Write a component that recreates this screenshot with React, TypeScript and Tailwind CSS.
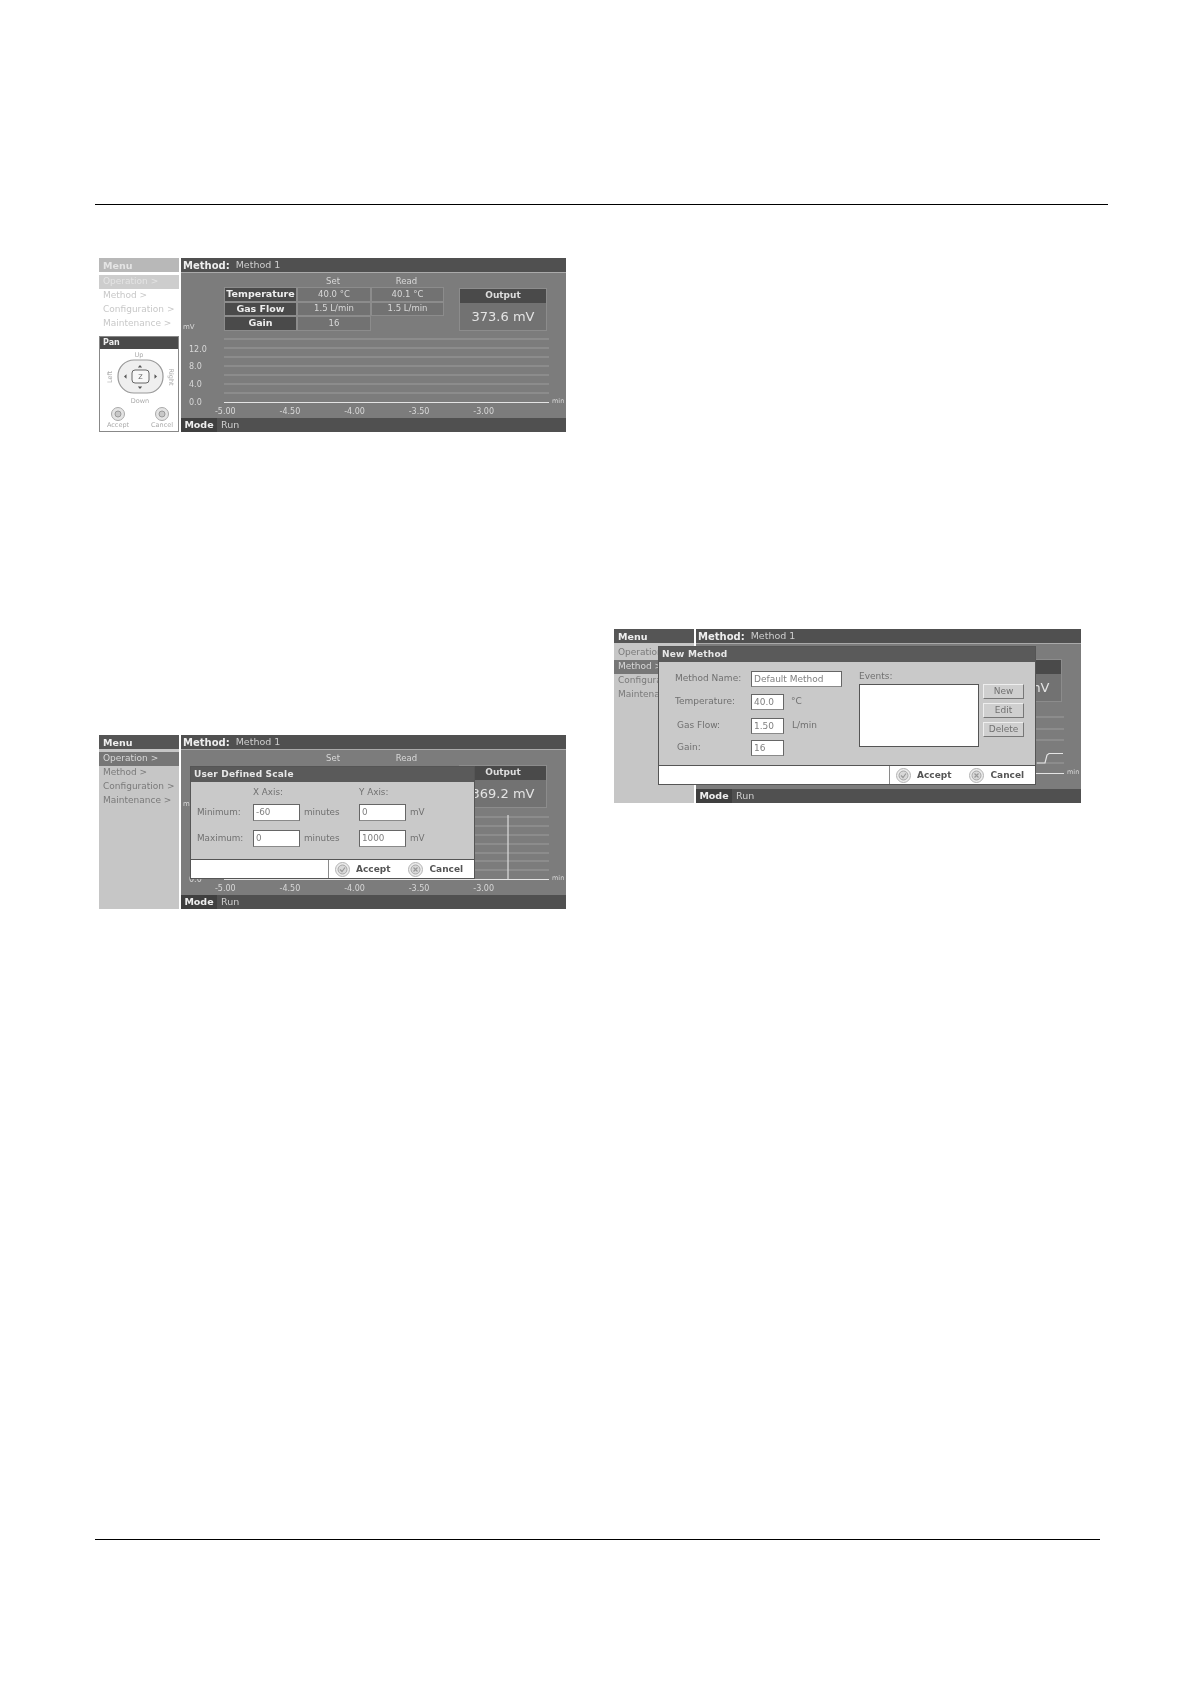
import type { ReactNode } from "react";

const menuItems = ["Operation >", "Method >", "Configuration >", "Maintenance >"];
const xLabels = ["-5.00", "-4.50", "-4.00", "-3.50", "-3.00"];
const yLabels = ["12.0", "8.0", "4.0", "0.0"];

function RoundIcon({ cancel }: { cancel?: boolean }) {
  return (
    <svg width="15" height="15" viewBox="0 0 15 15" className="shrink-0">
      <circle cx="7.5" cy="7.5" r="7" fill="#ececec" stroke="#b4b4b4" />
      <circle cx="7.5" cy="7.5" r="4.5" fill="#d8d8d8" stroke="#a6a6a6" />
      {cancel ? (
        <path d="M5.5 5.5l4 4M9.5 5.5l-4 4" stroke="#999" strokeWidth="1.2" />
      ) : (
        <path d="M5 7.5l2 2 3-4" stroke="#999" strokeWidth="1.2" fill="none" />
      )}
    </svg>
  );
}

function DialogFooter({ left, gap }: { left: number; gap: number }) {
  return (
    <div className="flex h-[19px] shrink-0 border-t border-[#555] bg-white">
      <div style={{ width: left }} className="border-r border-[#8a8a8a]" />
      <div className="flex flex-1 items-center pl-[6px] pt-[1px] text-[9px] font-bold text-[#555]">
        <RoundIcon />
        <span className="ml-[6px]" style={{ marginRight: gap }}>Accept</span>
        <RoundIcon cancel />
        <span className="ml-[6px]">Cancel</span>
      </div>
    </div>
  );
}

function Input({ w, h = 17, value }: { w: number; h?: number; value?: string }) {
  return (
    <div
      style={{ width: w, height: h }}
      className="flex shrink-0 items-center border border-[#666] border-b-[#8a8a8a] bg-white pl-[2px] leading-none text-[#808080]"
    >
      {value}
    </div>
  );
}

function DialogShell({ title, className, children }: { title: string; className: string; children: ReactNode }) {
  return (
    <div className={`absolute flex flex-col border border-[#555] bg-[#c9c9c9] ${className}`}>
      <div className="flex h-[15px] shrink-0 items-center bg-[#5a5a5a] pl-[3px] pt-[1px] text-[9px] font-bold tracking-[0.2px] text-[#e8e8e8]">
        {title}
      </div>
      {children}
    </div>
  );
}

function ScaleDialog() {
  return (
    <DialogShell title="User Defined Scale" className="left-[91px] top-[31px] h-[113px] w-[285px]">
      <div className="flex-1 pl-[6px] pt-[4px] text-[8.8px] text-[#707070]">
        <div className="flex h-[14px] items-center">
          <span className="ml-[56px] w-[106px]">X Axis:</span>
          <span>Y Axis:</span>
        </div>
        <div className="mt-[4px] flex items-center">
          <span className="w-[56px]">Minimum:</span>
          <Input w={47} value="-60" />
          <span className="w-[59px] pl-[4px]">minutes</span>
          <Input w={47} value="0" />
          <span className="pl-[4px]">mV</span>
        </div>
        <div className="mt-[9px] flex items-center">
          <span className="w-[56px]">Maximum:</span>
          <Input w={47} value="0" />
          <span className="w-[59px] pl-[4px]">minutes</span>
          <Input w={47} value="1000" />
          <span className="pl-[4px]">mV</span>
        </div>
      </div>
      <DialogFooter left={138} gap={18} />
    </DialogShell>
  );
}

function MethodDialog() {
  return (
    <DialogShell title="New Method" className="left-[44px] top-[17px] h-[139px] w-[378px]">
      <div className="flex flex-1 text-[9px] text-[#707070]">
        <div className="w-[200px] pl-[16px] pt-[9px]">
          <div className="flex items-center">
            <span className="w-[76px]">Method Name:</span>
            <Input w={91} h={16} value="Default Method" />
          </div>
          <div className="mt-[7px] flex items-center">
            <span className="w-[76px]">Temperature:</span>
            <Input w={33} h={16} value="40.0" />
            <span className="ml-[7px]">°C</span>
          </div>
          <div className="mt-[8px] flex items-center">
            <span className="w-[76px] pl-[2px]">Gas Flow:</span>
            <Input w={33} h={16} value="1.50" />
            <span className="ml-[8px]">L/min</span>
          </div>
          <div className="mt-[6px] flex items-center">
            <span className="w-[76px] pl-[2px]">Gain:</span>
            <Input w={33} h={16} value="16" />
          </div>
        </div>
        <div className="w-[124px] pt-[8px]">
          <div className="flex h-[14px] items-center">Events:</div>
          <div className="h-[63px] w-[120px] border border-[#555] bg-white" />
        </div>
        <div className="flex flex-col gap-[4px] pt-[22px]">
          {["New", "Edit", "Delete"].map((b) => (
            <div
              key={b}
              className="flex h-[15px] w-[41px] items-center justify-center border border-t-[#eee] border-l-[#eee] border-r-[#777] border-b-[#777] bg-[#cfcfcf]"
            >
              {b}
            </div>
          ))}
        </div>
      </div>
      <DialogFooter left={231} gap={18} />
    </DialogShell>
  );
}

function PanPanel() {
  return (
    <div className="mt-auto flex h-[96px] flex-col border border-[#888] bg-white">
      <div className="flex h-[12px] items-center bg-[#4a4a4a] pl-[3px] text-[8px] font-bold text-[#eee]">Pan</div>
      <svg viewBox="0 0 78 82" className="flex-1" fontFamily="DejaVu Sans" fontSize="6.5" fill="#aaa">
        <text x="39" y="8" textAnchor="middle">Up</text>
        <text x="40" y="54" textAnchor="middle">Down</text>
        <text transform="translate(12 28) rotate(-90)" textAnchor="middle">Left</text>
        <text transform="translate(69 28) rotate(90)" textAnchor="middle">Right</text>
        <rect x="18" y="11" width="45" height="33" rx="16" fill="#efefef" stroke="#999" strokeWidth="1.2" />
        <rect x="32" y="21" width="17" height="13" rx="3" fill="#f7f7f7" stroke="#666" />
        <text x="40.5" y="30" textAnchor="middle" fill="#666">Z</text>
        <path d="M40 16l2.2 2.5h-4.4zM40 40l2.2-2.5h-4.4zM24 27.5l2.5-2.2v4.4zM57 27.5l-2.5-2.2v4.4z" fill="#555" />
        <circle cx="18" cy="65" r="6.5" fill="#e4e4e4" stroke="#aaa" />
        <circle cx="18" cy="65" r="3" fill="#c8c8c8" stroke="#999" />
        <circle cx="62" cy="65" r="6.5" fill="#e4e4e4" stroke="#aaa" />
        <circle cx="62" cy="65" r="3" fill="#c8c8c8" stroke="#999" />
        <text x="18" y="78" textAnchor="middle">Accept</text>
        <text x="62" y="78" textAnchor="middle">Cancel</text>
      </svg>
    </div>
  );
}

type ScreenProps = {
  selected: number;
  output: string;
  grid: number[];
  washed?: boolean;
  // what a dialog lies over: those texts aren't seen, so they aren't drawn
  hideRows?: boolean;
  hideHeads?: boolean;
  hideLabels?: boolean;
  trace?: ReactNode;
  children?: ReactNode;
};

function Screen({ selected, output, grid, washed, hideRows, hideHeads, hideLabels, trace, children }: ScreenProps) {
  const tableCell = "flex items-center justify-center border border-[#8c8c8c]";
  return (
    <div className="relative flex h-[174px] w-[467px] font-['DejaVu_Sans',sans-serif] blur-[0.5px]">
      <div className={`flex w-[80px] flex-col ${washed ? "bg-white" : "bg-[#c6c6c6]"}`}>
        <div className={`flex h-[14px] items-center pl-[4px] pt-[2px] text-[9.5px] font-bold ${washed ? "bg-[#b8b8b8] text-[#e4e4e4]" : "bg-[#555] text-[#eee]"}`}>
          Menu
        </div>
        <div className="pt-[3px]">
          {menuItems.map((item, i) => {
            const active = i === selected;
            const tone = washed
              ? active
                ? "bg-[#cdcdcd] text-[#e4e4e4]"
                : "text-[#c8c8c8]"
              : active
                ? "bg-[#767676] text-[#d8d8d8]"
                : "text-[#7a7a7a]";
            return (
              <div key={item} className={`flex h-[14px] items-center pl-[4px] text-[9px] whitespace-nowrap ${tone}`}>
                {item}
              </div>
            );
          })}
        </div>
        {washed && <PanPanel />}
      </div>

      <div className="ml-[2px] flex w-[385px] flex-col bg-[#7c7c7c]">
        <div className="flex h-[14px] shrink-0 items-center gap-[6px] bg-[#505050] pl-[2px] pt-[1px] text-[9.5px] text-[#cfcfcf]">
          <span className="text-[10px] font-bold text-[#eee]">Method:</span>
          <span>Method 1</span>
        </div>
        <div className="h-[146px] border-t border-[#aaa] text-[8.5px] text-[#d8d8d8]">
          <div className="flex h-[58px]">
            <div className="flex w-[43px] items-end pl-[2px] text-[7px] leading-none">{!hideHeads && "mV"}</div>
            <div className="w-[220px]">
              <div className="flex h-[14px] items-center pl-[72px] pt-[2px] text-center">
                {!hideHeads && <span className="w-[74px]">Set</span>}
                {!hideHeads && <span className="w-[73px]">Read</span>}
              </div>
              {!hideRows &&
                [
                  ["Temperature", "40.0 °C", "40.1 °C"],
                  ["Gas Flow", "1.5 L/min", "1.5 L/min"],
                  ["Gain", "16"],
                ].map((row) => (
                  <div key={row[0]} className="flex h-[14.5px]">
                    <div className={`${tableCell} w-[73px] bg-[#4a4a4a] text-[9.5px] font-bold whitespace-nowrap text-[#eee]`}>{row[0]}</div>
                    {row.slice(1).map((v, i) => (
                      <div key={i} className={`${tableCell} ${i ? "w-[73px]" : "w-[74px]"} bg-[#727272]`}>{v}</div>
                    ))}
                  </div>
                ))}
            </div>
            <div className="ml-[15px] mt-[15px] flex h-[43px] w-[88px] flex-col border border-[#8c8c8c]">
              <div className="flex h-[14px] items-center justify-center bg-[#4a4a4a] text-[9px] font-bold text-[#ddd]">
                {!hideHeads && "Output"}
              </div>
              <div className="flex flex-1 items-center justify-center bg-[#727272] text-[13px] whitespace-nowrap text-[#e4e4e4]">
                {output}
              </div>
            </div>
          </div>
          <div className="mt-[7px] flex h-[66px]">
            <div className="w-[43px] pl-[8px] pt-[3px] text-[8px]">
              {yLabels.map((l) => (
                <div key={l} className="flex h-[17.6px] items-center">{hideLabels && l !== "0.0" ? "" : hideHeads ? "" : l}</div>
              ))}
            </div>
            <svg width="325" height="66" className="shrink-0">
              {grid.map((y) => (
                <line key={y} x1="0" x2="325" y1={y} y2={y} stroke="#9c9c9c" />
              ))}
              <line x1="0" x2="325" y1="64.5" y2="64.5" stroke="#e4e4e4" strokeWidth="1.2" />
              {trace}
            </svg>
            <div className="ml-[3px] self-end text-[6.5px] leading-none">min</div>
          </div>
          <div className="ml-[12px] flex h-[14px] items-center pt-[1px] text-center text-[8px]">
            {!hideHeads && xLabels.map((l) => (
              <span key={l} className="w-[64.6px]">{l}</span>
            ))}
          </div>
        </div>
        <div className="flex h-[14px] shrink-0 items-center bg-[#505050] text-[9.5px] text-[#cfcfcf]">
          <span className="flex h-full w-[36px] items-center justify-center bg-[#3f3f3f] font-bold text-[#eee]">Mode</span>
          <span className="pl-[4px]">Run</span>
        </div>
      </div>
      {children}
    </div>
  );
}

export default function App() {
  return (
    <div className="flex h-[1684px] w-[1190px] flex-col bg-white px-[95px] pb-[144px] pt-[204px]">
      <div className="h-[1px] w-[1013px] shrink-0 bg-black" />
      <div className="flex flex-1">
        <div className="w-[519px] pl-[4px] pt-[53px]">
          <Screen selected={0} output="373.6 mV" washed grid={[1, 10, 19, 28, 37, 46, 55]} />
          <div className="mt-[303px]">
            <Screen
              selected={0}
              output="369.2 mV"
              grid={[2, 11, 20, 29, 38, 46, 55]}
              hideRows
              hideLabels
              trace={<path d="M284 0V64" stroke="#ddd" strokeWidth="1.2" fill="none" />}
            >
              <ScaleDialog />
            </Screen>
          </div>
        </div>
        <div className="pt-[424px]">
          <Screen
            selected={1}
            output="369.2 mV"
            grid={[8, 20, 31, 54]}
            hideRows
            hideHeads
            trace={<path d="M298 54h8l2-8 2-1.5h14" stroke="#e4e4e4" strokeWidth="1.2" fill="none" />}
          >
            <MethodDialog />
          </Screen>
        </div>
      </div>
      <div className="h-[1px] w-[1005px] shrink-0 bg-black" />
    </div>
  );
}
